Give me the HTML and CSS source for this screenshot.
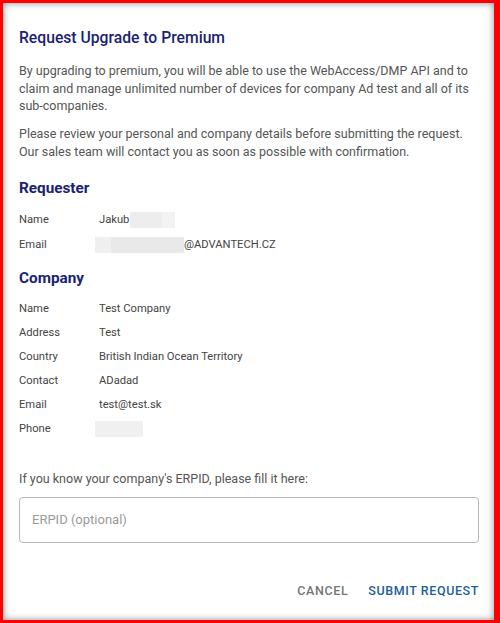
FILE: index.html
```html
<!DOCTYPE html>
<html lang="en">
<head>
<meta charset="utf-8">
<title>Request Upgrade to Premium</title>
<link rel="stylesheet" href="styles.css">
</head>
<body>
<div class="frame">
  <div class="dialog">
    <h1 class="title">Request Upgrade to Premium</h1>
    <p class="text p1">By upgrading to premium, you will be able to use the WebAccess/DMP API and to claim and manage unlimited number of devices for company Ad test and all of its sub-companies.</p>
    <p class="text p2">Please review your personal and company details before submitting the request. Our sales team will contact you as soon as possible with confirmation.</p>

    <h2 class="section requester">Requester</h2>
    <div class="rows rows-req">
      <div class="row"><span class="label">Name</span><span class="value">Jakub<span class="blur blur-name"></span></span></div>
      <div class="row"><span class="label">Email</span><span class="value"><span class="blur blur-email"></span>@ADVANTECH.CZ</span></div>
    </div>

    <h2 class="section company">Company</h2>
    <div class="rows rows-comp">
      <div class="row"><span class="label">Name</span><span class="value">Test Company</span></div>
      <div class="row"><span class="label">Address</span><span class="value">Test</span></div>
      <div class="row"><span class="label">Country</span><span class="value">British Indian Ocean Territory</span></div>
      <div class="row"><span class="label">Contact</span><span class="value">ADadad</span></div>
      <div class="row"><span class="label">Email</span><span class="value">test@test.sk</span></div>
      <div class="row"><span class="label">Phone</span><span class="value"><span class="blur blur-phone"></span></span></div>
    </div>

    <p class="text prompt">If you know your company's ERPID, please fill it here:</p>
    <div class="field"><input class="input" type="text" placeholder="ERPID (optional)"></div>

    <div class="actions">
      <button class="btn btn-cancel" type="button">Cancel</button>
      <button class="btn btn-submit" type="button">Submit request</button>
    </div>
  </div>
</div>
</body>
</html>
```

FILE: styles.css
```css
* { box-sizing: border-box; }
html, body { margin: 0; padding: 0; background: #ff0000; }
body { font-family: Roboto, "Liberation Sans", Arial, sans-serif; }

.frame {
  width: 500px;
  height: 623px;
  border-style: solid;
  border-color: #ff0000;
  border-width: 3px 6px 3px 3px;
}

.dialog {
  height: 100%;
  background: #ffffff;
  box-shadow: inset 0 0 7px rgba(0, 0, 0, 0.45);
  padding: 23px 15px 0 16px;
  display: flex;
  flex-direction: column;
}

.title {
  margin: 0;
  font-size: 15.7px;
  font-weight: 500;
  line-height: 24px;
  color: #1a2371;
}

.text {
  margin: 0;
  font-size: 12.5px;
  line-height: 17.5px;
  color: #555555;
}
.p1 { margin-top: 12px; }
.p2 { margin-top: 10.5px; }

.section {
  margin: 0;
  font-size: 15.3px;
  font-weight: 700;
  line-height: 22px;
  color: #1a2371;
}
.requester { margin-top: 17px; }
.company { margin-top: 9.5px; }

.rows { display: flex; flex-direction: column; margin-top: 8px; }
.row {
  display: flex;
  align-items: center;
  height: 24px;
  font-size: 11.2px;
  color: #444444;
}
.rows-req .row { height: 25px; }
.label { width: 80px; flex: none; }
.value { display: flex; align-items: center; }

.blur { display: inline-block; height: 16px; background: #ececec; }
.blur-name { width: 45px; margin-left: 1px; background: linear-gradient(90deg, #ededed 0 70%, #f2f2f2 70%); }
.blur-email { width: 89px; margin-left: -4px; background: linear-gradient(90deg, #efefef 0 18%, #e9e9e9 18% 100%); }
.blur-phone { width: 48px; margin-left: -4px; background: #f0f0f0; }

.prompt { margin-top: 29px; line-height: 18px; }

.field { margin-top: 9px; }
.input {
  display: block;
  width: 100%;
  height: 46px;
  border: 1px solid #b8b8b8;
  border-radius: 4px;
  padding: 0 12px;
  font-family: inherit;
  font-size: 13px;
  color: #333333;
  background: #ffffff;
  outline: none;
}
.input::placeholder { color: #9a9a9a; }

.actions {
  margin-top: 38px;
  display: flex;
  justify-content: flex-end;
  gap: 20px;
}
.btn {
  border: 0;
  background: none;
  padding: 0;
  font-family: inherit;
  font-size: 12.5px;
  font-weight: 500;
  letter-spacing: 0.6px;
  text-transform: uppercase;
  line-height: 20px;
}
.btn-cancel { color: #757575; }
.btn-submit { color: #1d5f9a; }
```
